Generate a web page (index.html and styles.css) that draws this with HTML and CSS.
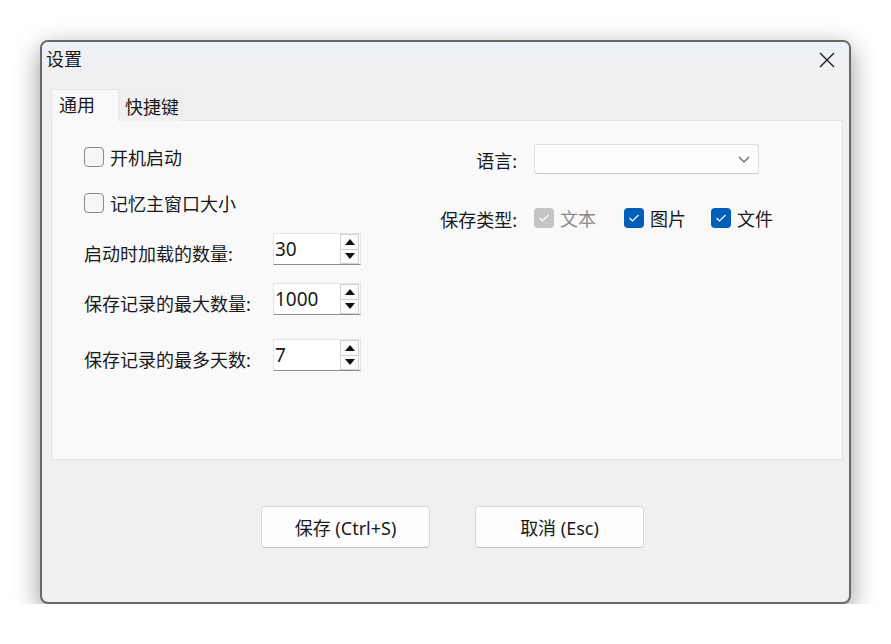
FILE: index.html
```html
<!DOCTYPE html>
<html lang="zh-CN">
<head>
    <meta charset="UTF-8">
    <title>设置</title>
    <link rel="stylesheet" href="styles.css">
</head>
<body>

    <div class="dlg">
        <div class="dlg-titlebar">
            <span class="dlg-title">设置</span>
            <button class="dlg-close" title="关闭">
                <svg width="16" height="16" viewBox="0 0 16 16"><path d="M1 1 L15 15 M15 1 L1 15" stroke="#1b1b1b" stroke-width="1.4" fill="none"/></svg>
            </button>
        </div>

        <div class="dlg-tabs">
            <div class="dlg-tabbar">
                <div class="dlg-tab dlg-tab-active">通用</div>
                <div class="dlg-tab">快捷键</div>
            </div>

            <div class="dlg-pane">
                <div class="col-left">
                    <label class="row chk-row">
                        <span class="chk"></span>
                        <span>开机启动</span>
                    </label>
                    <label class="row chk-row">
                        <span class="chk"></span>
                        <span>记忆主窗口大小</span>
                    </label>

                    <div class="row spin-row">
                        <span class="spin-label">启动时加载的数量:</span>
                        <div class="spin">
                            <span class="spin-value">30</span>
                            <div class="spin-btns">
                                <span class="spin-btn"><i class="tri-up"></i></span>
                                <span class="spin-btn"><i class="tri-down"></i></span>
                            </div>
                        </div>
                    </div>
                    <div class="row spin-row row-max">
                        <span class="spin-label">保存记录的最大数量:</span>
                        <div class="spin">
                            <span class="spin-value">1000</span>
                            <div class="spin-btns">
                                <span class="spin-btn"><i class="tri-up"></i></span>
                                <span class="spin-btn"><i class="tri-down"></i></span>
                            </div>
                        </div>
                    </div>
                    <div class="row spin-row row-days">
                        <span class="spin-label">保存记录的最多天数:</span>
                        <div class="spin">
                            <span class="spin-value">7</span>
                            <div class="spin-btns">
                                <span class="spin-btn"><i class="tri-up"></i></span>
                                <span class="spin-btn"><i class="tri-down"></i></span>
                            </div>
                        </div>
                    </div>
                </div>

                <div class="col-right">
                    <span class="field-label">语言:</span>
                    <div class="combo">
                        <svg width="12" height="7" viewBox="0 0 12 7"><path d="M1 1 L6 6 L11 1" stroke="#5c5c5c" stroke-width="1.1" fill="none"/></svg>
                    </div>

                    <span class="field-label">保存类型:</span>
                    <div class="type-list">
                        <label class="type-item type-disabled">
                            <span class="chk chk-on chk-off-state">
                                <svg width="12" height="10" viewBox="0 0 12 10"><path d="M1.5 5 L4.5 8 L10.5 2" stroke="#fff" stroke-width="1.2" fill="none"/></svg>
                            </span>
                            <span>文本</span>
                        </label>
                        <label class="type-item">
                            <span class="chk chk-on">
                                <svg width="12" height="10" viewBox="0 0 12 10"><path d="M1.5 5 L4.5 8 L10.5 2" stroke="#fff" stroke-width="1.2" fill="none"/></svg>
                            </span>
                            <span>图片</span>
                        </label>
                        <label class="type-item">
                            <span class="chk chk-on">
                                <svg width="12" height="10" viewBox="0 0 12 10"><path d="M1.5 5 L4.5 8 L10.5 2" stroke="#fff" stroke-width="1.2" fill="none"/></svg>
                            </span>
                            <span>文件</span>
                        </label>
                    </div>
                </div>
            </div>
        </div>

        <div class="dlg-actions">
            <button class="dlg-btn">保存 (Ctrl+S)</button>
            <button class="dlg-btn">取消 (Esc)</button>
        </div>
    </div>

</body>
</html>
```

FILE: styles.css
```css
:root {
    --text-color: #1a1a1a;
    --accent: #005fb8;
    --pane-bg: #f9f9f9;
    --dlg-bg: #f0f0f0;
    --line: #e2e2e2;
}

body {
    margin: 0;
    padding: 40px 0 0 40px;
    background-color: #fff;
    font-family: "Noto Sans", "Noto Sans CJK SC", sans-serif;
    font-size: 18px;
    color: var(--text-color);
}

.dlg {
    width: 811px;
    height: 564px;
    box-sizing: border-box;
    border: 2px solid #686868;
    border-radius: 8px;
    background-color: var(--dlg-bg);
    box-shadow: 0 8px 26px rgba(0, 0, 0, 0.42);
    overflow: hidden;
}

.dlg-titlebar {
    height: 36px;
    display: flex;
    align-items: center;
    justify-content: space-between;
    padding: 0 14px 0 4px;
    background: linear-gradient(#eef1f9, #f0f1f4 60%, #f0f0f0);
}

.dlg-title {
    line-height: 1;
    margin-top: -2px;
}

.dlg-close {
    border: none;
    background: none;
    padding: 0;
    width: 16px;
    height: 16px;
    display: flex;
}

.dlg-tabs {
    margin: 11px 6px 0 9px;
}

.dlg-tabbar {
    display: flex;
    align-items: flex-end;
    margin-bottom: -1px;
    position: relative;
    z-index: 1;
}

.dlg-tab {
    height: 28px;
    line-height: 28px;
    padding: 0 2px 0 5px;
    background-color: #f0f0f0;
    border: 1px solid #ebebeb;
    border-bottom: none;
}

.dlg-tab-active {
    height: 31px;
    line-height: 30px;
    width: 57px;
    padding: 0 2px 0 7px;
    background-color: var(--pane-bg);
    border-color: #e6e6e6;
}

.dlg-pane {
    height: 340px;
    box-sizing: border-box;
    border: 1px solid var(--line);
    background-color: var(--pane-bg);
    display: flex;
    padding: 20px 0 0 32px;
}

/* left column */
.col-left {
    width: 353px;
    display: flex;
    flex-direction: column;
    gap: 14px;
}

.row {
    height: 32px;
    display: flex;
    align-items: center;
}

.chk-row {
    gap: 6px;
}

.row-max {
    margin-top: 4px;
}

.row-days {
    margin-top: 10px;
}

.spin-label {
    width: 189px;
    padding-top: 7px;
}

.chk {
    width: 20px;
    height: 20px;
    box-sizing: border-box;
    border: 1px solid #8a8a8a;
    border-radius: 4px;
    background-color: #f6f6f6;
    display: flex;
    align-items: center;
    justify-content: center;
    flex-shrink: 0;
}

.chk-on {
    border: none;
    background-color: var(--accent);
}

.chk-off-state {
    background-color: #c4c4c4;
}

.spin {
    width: 88px;
    height: 32px;
    box-sizing: border-box;
    border: 1px solid #e4e4e4;
    border-bottom-color: #8d8d8d;
    background-color: #fff;
    display: flex;
    align-items: center;
    justify-content: space-between;
}

.spin-value {
    font-size: 19px;
    padding-left: 1px;
}

.spin-btns {
    display: flex;
    flex-direction: column;
    height: 30px;
    width: 19px;
    margin-right: 1px;
}

.spin-btn {
    flex: 1;
    border: 1px solid #d2d2d2;
    background-color: #fcfcfc;
    display: flex;
    align-items: center;
    justify-content: center;
}

.spin-btn + .spin-btn {
    border-top: none;
}

.tri-up,
.tri-down {
    width: 0;
    height: 0;
    border-left: 5px solid transparent;
    border-right: 5px solid transparent;
}

.tri-up {
    border-bottom: 6px solid #111;
}

.tri-down {
    border-top: 6px solid #111;
}

/* right column */
.col-right {
    display: grid;
    grid-template-columns: 82px auto;
    column-gap: 17px;
    row-gap: 29px;
    align-items: center;
    align-content: start;
    margin-top: 3px;
    margin-left: -2px;
}

.field-label {
    text-align: right;
    white-space: nowrap;
    padding-top: 2px;
}

.combo {
    width: 225px;
    height: 30px;
    box-sizing: border-box;
    border: 1px solid #dedede;
    border-bottom-color: #c6c6c6;
    border-radius: 3px;
    background-color: #fdfdfd;
    display: flex;
    align-items: center;
    justify-content: flex-end;
    padding-right: 8px;
}

.type-list {
    display: flex;
    align-items: center;
    height: 30px;
}

.type-item {
    display: flex;
    align-items: center;
    gap: 6px;
    width: 90px;
}

.type-item + .type-item + .type-item {
    margin-left: -3px;
}

.type-disabled {
    color: #8a8a8a;
}

/* bottom buttons */
.dlg-actions {
    display: flex;
    gap: 45px;
    padding-left: 219px;
    margin-top: 46px;
}

.dlg-btn {
    width: 169px;
    height: 42px;
    border: 1px solid #d8d8d8;
    border-bottom-color: #c2c2c2;
    border-radius: 4px;
    background-color: #fdfdfd;
    font-family: inherit;
    font-size: 18px;
    color: var(--text-color);
    cursor: pointer;
}
```
